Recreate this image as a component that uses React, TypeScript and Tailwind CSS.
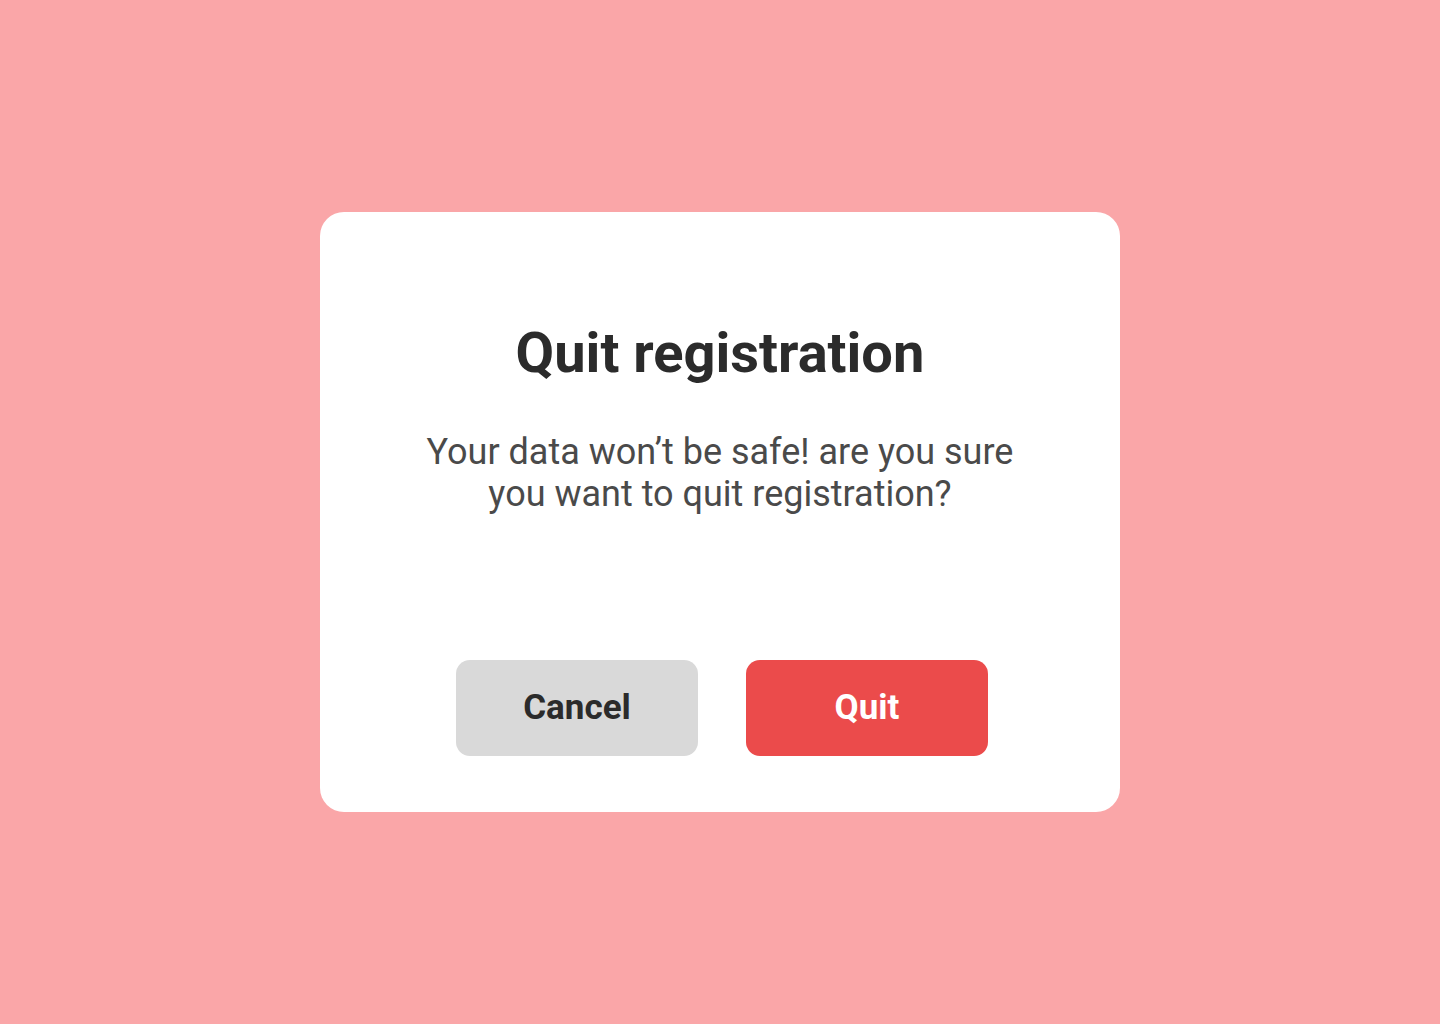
export default function App() {
  return (
    <div className="flex min-h-screen w-full items-center justify-center bg-[#faa6a8] font-['Roboto',sans-serif]">
      <div className="flex h-[600px] w-[800px] flex-col items-center rounded-[24px] bg-white pt-[109px]">
        <h1 className="text-[56px] font-bold leading-[64px] text-[#2b2b2b]">Quit registration</h1>
        <p className="mt-[46px] w-[620px] text-center text-[36px] leading-[42px] text-[#4a4a4a]">
          Your data won’t be safe! are you sure you want to quit registration?
        </p>
        <div className="mt-auto mb-[56px] ml-[4px] flex gap-[48px]">
          <button className="h-[96px] w-[242px] rounded-[14px] bg-[#d9d9d9] text-[35px] font-bold text-[#2b2b2b]">
            Cancel
          </button>
          <button className="h-[96px] w-[242px] rounded-[14px] bg-[#eb4b4b] text-[35px] font-bold text-white">
            Quit
          </button>
        </div>
      </div>
    </div>
  );
}
